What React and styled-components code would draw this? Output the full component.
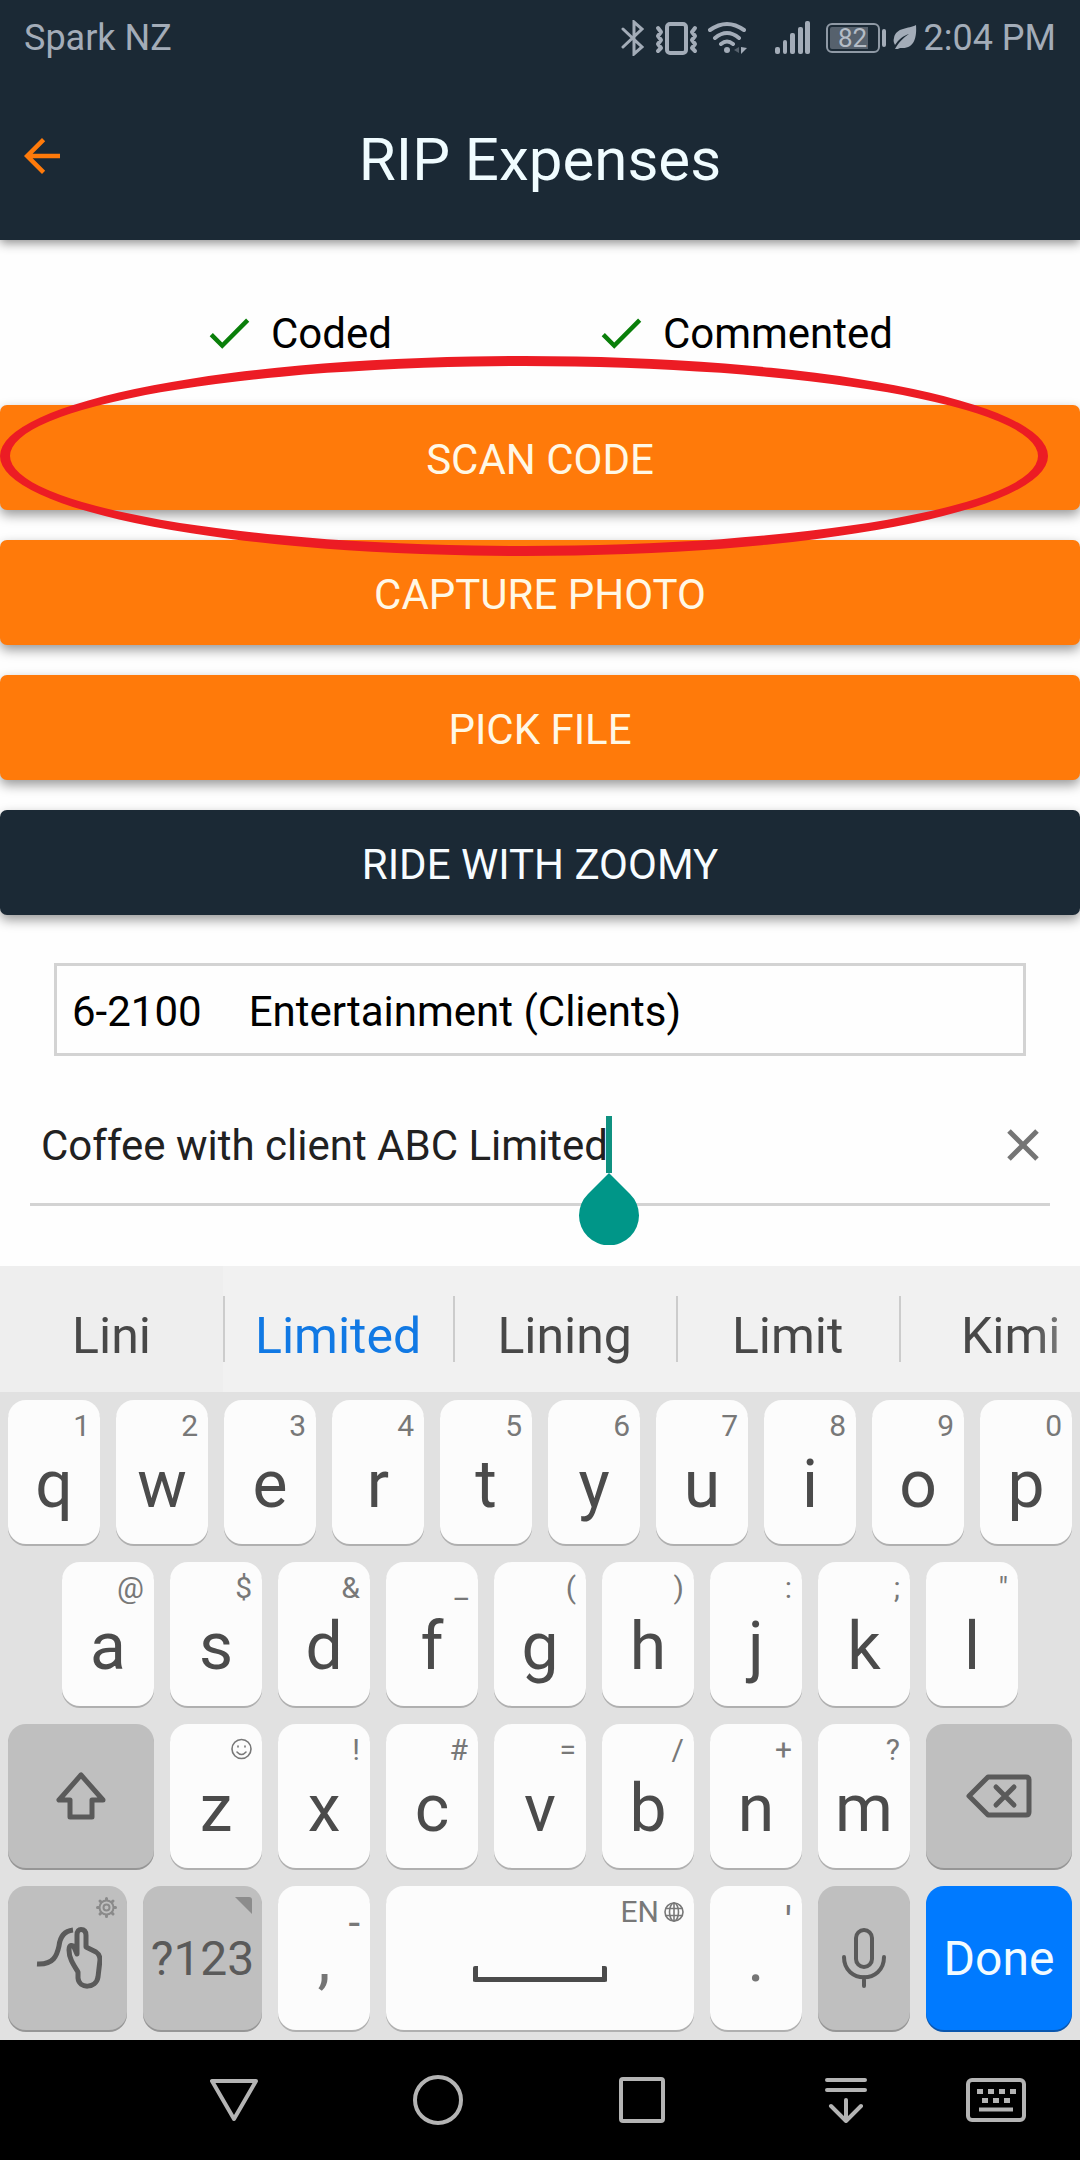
import { useState } from "react";
import styled, { createGlobalStyle } from "styled-components";

const GlobalStyle = createGlobalStyle`
  * {
    box-sizing: border-box;
  }
  body {
    margin: 0;
    background: #fefefe;
    font-family: Roboto, "Noto Sans", sans-serif;
  }
  button,
  input {
    margin: 0;
    padding: 0;
    border: 0;
    background: none;
    font-family: inherit;
    font-weight: 400;
  }
  svg {
    display: block;
    flex-shrink: 0;
  }
`;

const Page = styled.div`
  display: flex;
  flex-direction: column;
  min-height: 100vh;
  overflow: hidden;
`;

/* header */

const Header = styled.header`
  background: #1b2935;
  box-shadow: 0 3px 10px rgba(0, 0, 0, 0.45);
`;

const StatusBar = styled.div`
  display: flex;
  align-items: center;
  justify-content: space-between;
  height: 76px;
  padding: 0 24px;
  font-size: 36px;
  color: #a3acb8;
`;

const StatusIcons = styled.div`
  display: flex;
  align-items: center;
  gap: 6px;
`;

const Battery = styled.div`
  display: flex;
  align-items: center;
  gap: 2px;
  margin-left: 8px;
  &:after {
    content: "";
    width: 4px;
    height: 18px;
    border-radius: 2px;
    background: #a3acb8;
  }
`;

const BatteryLevel = styled.span`
  width: 54px;
  height: 30px;
  padding: 2px;
  border: 2px solid #8f99a5;
  border-radius: 6px;
  background: linear-gradient(90deg, #56616d 82%, transparent 82%) content-box;
  font-size: 26px;
  line-height: 22px;
  text-align: center;
  color: #b4bcc6;
`;

const TitleBar = styled.div`
  display: grid;
  grid-template-columns: 36px 1fr 36px;
  align-items: center;
  height: 164px;
  padding: 0 24px 4px;
  h1 {
    margin: 0;
    padding-top: 6px;
    font-size: 60px;
    font-weight: 400;
    text-align: center;
    color: #f0fcff;
  }
`;

const IconButton = styled.button`
  display: flex;
  color: ${(props) => props.$color};
`;

/* form */

const Main = styled.main`
  flex: 1;
  padding: 66px 0 60px;
`;

const Checks = styled.div`
  display: flex;
  justify-content: space-between;
  padding: 0 187px 0 202px;
  margin-bottom: 45px;
`;

const Check = styled.div`
  display: flex;
  align-items: center;
  gap: 15px;
  height: 54px;
  font-size: 42px;
  color: #000000;
  svg {
    color: #0a7f0a;
  }
`;

const Actions = styled.div`
  position: relative;
  display: flex;
  flex-direction: column;
  gap: 30px;
`;

const ActionButton = styled.button`
  height: 105px;
  padding-top: 4px;
  border-radius: 7px;
  background: ${(props) => (props.$dark ? "#1b2935" : "#ff7a0a")};
  box-shadow: 0 5px 12px rgba(0, 0, 0, 0.4);
  font-size: 42px;
  text-transform: uppercase;
  color: ${(props) => (props.$dark ? "#f7fcff" : "#fff8e6")};
`;

/* red ring drawn over the first button */
const Highlight = styled.div`
  position: absolute;
  top: -49px;
  left: 0;
  width: 97%;
  height: 200px;
  border: 10px solid #ec1c24;
  border-radius: 50%;
  pointer-events: none;
`;

const AccountPicker = styled.button`
  display: flex;
  align-items: center;
  gap: 47px;
  width: calc(100% - 108px);
  height: 93px;
  margin: 48px 54px 30px;
  padding: 4px 15px 0;
  border: 3px solid #d3d3d3;
  font-size: 42px;
  color: #000000;
`;

const Comment = styled.div`
  display: flex;
  align-items: center;
  height: 120px;
  margin: 0 30px;
  padding: 0 11px;
  border-bottom: 3px solid #d3d3d3;
  input {
    field-sizing: content;
    height: 57px;
    padding-top: 2px;
    font-size: 42px;
    color: #212121;
    caret-color: transparent;
    outline: none;
  }
  button {
    margin-left: auto;
  }
`;

const Caret = styled.span`
  position: relative;
  width: 6px;
  height: 57px;
  margin-left: -2px;
  background: #0f9180;
  svg {
    position: absolute;
    top: 100%;
    left: -27px;
  }
`;

/* keyboard */

const Suggestions = styled.div`
  display: flex;
  height: 126px;
  overflow: hidden;
  background: #f1f1f1;
`;

const Suggestion = styled.button`
  flex: none;
  min-width: 223px;
  padding: 14px 32px 0;
  background: ${(props) => (props.$pressed ? "#eeeeee" : "none")};
  font-size: 50px;
  color: ${(props) => (props.$main ? "#1179e4" : "#484848")};
  & + & {
    background-image: linear-gradient(#cccccc, #cccccc);
    background-repeat: no-repeat;
    background-size: 2px 66px;
    background-position: left center;
  }
  &:last-child {
    color: transparent;
    background-image: linear-gradient(#cccccc, #cccccc),
      linear-gradient(90deg, #484848 130px, #8a8a8a 170px);
    background-size: 2px 66px, 100% 100%;
    background-clip: border-box, text;
  }
`;

const Keyboard = styled.div`
  display: grid;
  grid-template-columns: repeat(40, 1fr);
  row-gap: 18px;
  padding: 8px 0 10px;
  background: #e1e1e1;
`;

const keyColors = {
  light: { bg: "#fcfcfc", text: "#4b4b4b", edge: "#b0b0b0" },
  gray: { bg: "#bfbfbf", text: "#5a5a5a", edge: "#969696" },
  blue: { bg: "#007aff", text: "#f2fbff", edge: "#0a56ae" },
};

const KeyCap = styled.button`
  position: relative;
  display: flex;
  align-items: center;
  justify-content: center;
  grid-column: ${(props) => (props.$start ? `${props.$start} / ` : "")}span
    ${(props) => props.$span};
  height: 144px;
  margin: 0 8px;
  padding-top: ${(props) => (props.$letter ? "24px" : "0")};
  border-radius: 18px;
  background: ${(props) => keyColors[props.$tone].bg};
  box-shadow: 0 2px 0 ${(props) => keyColors[props.$tone].edge};
  font-size: ${(props) => (props.$small ? "48px" : "66px")};
  color: ${(props) =>
    props.$muted ? "#757575" : keyColors[props.$tone].text};
`;

const Hint = styled.span`
  position: absolute;
  top: ${(props) => (props.$big ? "12px" : "8px")};
  right: 10px;
  display: flex;
  align-items: center;
  gap: 5px;
  font-size: ${(props) => (props.$big ? "42px" : "30px")};
  line-height: ${(props) => (props.$big ? "49px" : "35px")};
  color: #787878;
  svg:only-child {
    margin-top: 3px;
  }
  svg + svg,
  span + svg {
    margin-top: 0;
  }
`;

const SpaceMark = styled.span`
  width: 134px;
  height: 16px;
  margin-top: 32px;
  border: 5px solid #4b4b4b;
  border-top: 0;
  border-radius: 2px;
`;

const NavBar = styled.nav`
  display: grid;
  grid-template-columns: 132px repeat(4, 1fr) 96px 36px;
  height: 120px;
  background: #000000;
  button {
    display: flex;
    align-items: center;
    justify-content: center;
    color: #b4b4b4;
  }
  button:first-child {
    grid-column: 2;
  }
`;

const Icon = ({ w, h, stroke = 0, children }) => (
  <svg
    width={w}
    height={h}
    viewBox={`0 0 ${w} ${h}`}
    fill={stroke ? "none" : "currentColor"}
    stroke={stroke ? "currentColor" : "none"}
    strokeWidth={stroke}
    strokeLinecap="round"
    strokeLinejoin="round"
    aria-hidden="true"
  >
    {children}
  </svg>
);

const BluetoothIcon = () => (
  <Icon w={28} h={36} stroke={3}>
    <path d="M3 9l19 18-8 7V2l8 7L3 27" strokeLinejoin="miter" />
  </Icon>
);

const VibrateIcon = () => (
  <Icon w={46} h={36} stroke={4}>
    <rect x="13" y="4" width="19" height="29" rx="3" />
    <path
      strokeWidth="4"
      d="M4 8l3 4-3 4 3 4-3 4 3 4-3 3M41 8l-3 4 3 4-3 4 3 4-3 4 3 3"
    />
  </Icon>
);

const WifiIcon = () => (
  <Icon w={60} h={36} stroke={4}>
    <path d="M4 10Q21-2 38 10M9 18Q21 8 33 18M15 24q6-5 12 0" />
    <circle cx="21" cy="30" r="3" fill="currentColor" stroke="none" />
    <path d="M33 27v6l-5-3z" fill="#56616d" stroke="none" />
    <path d="M35 27v7l6-6z" fill="currentColor" stroke="none" />
  </Icon>
);

const SignalIcon = () => (
  <Icon w={40} h={36}>
    <rect x="3" y="27" width="5" height="7" rx="2" />
    <rect x="11" y="20" width="4" height="14" rx="2" />
    <rect x="18" y="13" width="5" height="21" rx="2" />
    <rect x="26" y="7" width="5" height="27" rx="2" />
    <rect x="33" y="1" width="5" height="33" rx="2" />
  </Icon>
);

const LeafIcon = () => (
  <Icon w={26} h={28}>
    <path d="M24 1C17 5 4 3 2 14c-1 3 0 5 1 7 4-6 8-9 14-11C11 14 7 18 3 25h3c1-1 2-1 3-1 13 1 16-10 15-23z" />
  </Icon>
);

const BackIcon = () => (
  <svg width="36" height="36" viewBox="4 4 16 16" fill="currentColor">
    <path d="M20 11H7.83l5.59-5.59L12 4l-8 8 8 8 1.41-1.41L7.83 13H20v-2z" />
  </svg>
);

const CheckIcon = () => (
  <svg width="54" height="54" viewBox="0 0 24 24" fill="currentColor">
    <path d="M9 16.17L4.83 12l-1.42 1.41L9 19 21 7l-1.41-1.41z" />
  </svg>
);

const CloseIcon = () => (
  <Icon w={32} h={32} stroke={5}>
    <path d="M2 2l28 28M30 2L2 30" strokeLinecap="butt" />
  </Icon>
);

const DropIcon = () => (
  <svg width="60" height="72" viewBox="0 0 60 72" fill="#009688">
    <path d="M30 0L51 21A30 30 0 1 1 9 21z" />
  </svg>
);

const SmileIcon = () => (
  <Icon w={21} h={27} stroke={1.6}>
    <circle cx="10.5" cy="14" r="9.5" />
    <path d="M6 17q4.500 5 9 0M7 11v1M14 11v1" />
  </Icon>
);

const GearIcon = () => (
  <Icon w={21} h={21} stroke={2}>
    <g stroke="#8a8a8a">
      <circle cx="10.500" cy="10.500" r="7" />
      <circle cx="10.500" cy="10.500" r="3" />
      <path
        strokeWidth="3"
        d="M10.500 1.500v1M10.500 18.500v1M1.500 10.500h1M18.500 10.500h1M4 4l1 1M16 16l1 1M4 17l1-1M16 5l1-1"
      />
    </g>
  </Icon>
);

const CornerIcon = () => (
  <svg width="17" height="17" viewBox="0 0 17 17" fill="#8c8c8c">
    <path d="M0 0h14q3 0 3 3v14z" />
  </svg>
);

const GlobeIcon = () => (
  <Icon w={20} h={20} stroke={1.6}>
    <circle cx="10" cy="10" r="9" />
    <ellipse cx="10" cy="10" rx="4.500" ry="9" />
    <path d="M10 1v18M2 6.500h16M2 13.500h16" />
  </Icon>
);

const ShiftIcon = () => (
  <Icon w={50} h={48} stroke={5}>
    <path d="M25 3L3 28h11v17h22V28h11z" />
  </Icon>
);

const BackspaceIcon = () => (
  <Icon w={66} h={44} stroke={5}>
    <path d="M22 3h38q3 0 3 3v32q0 3-3 3H22L3 22z" />
    <path d="M30 13l18 18M48 13L30 31" />
  </Icon>
);

const SwipeIcon = () => (
  <Icon w={68} h={62} stroke={5}>
    <path d="M3 37c17 1 20-9 22-18 1-9 5-15 14-16" strokeLinecap="butt" />
    <path d="M47 2.500c3 0 5 2 5 6V20l10 5c3 2 4 4 4 8l-2 17c-2 12-19 12-20 1v-6c-5-8-9-14-9-22 0-6 4-5 5-3l3 7V8c0-4 2-5.500 4-5.500z" />
  </Icon>
);

const MicIcon = () => (
  <Icon w={44} h={60} stroke={4}>
    <rect x="14" y="2" width="16" height="37" rx="8" />
    <path d="M2 29c0 27 40 27 40 0M22 49v9" />
  </Icon>
);

const rows = [
  ["q1", "w2", "e3", "r4", "t5", "y6", "u7", "i8", "o9", "p0"],
  ["a@", "s$", "d&", "f_", "g(", "h)", "j:", "k;", 'l"'],
  ["z", "x!", "c#", "v=", "b/", "n+", "m?"],
];

const Key = ({ tone = "light", span = 4, hint, bigHint, children, ...rest }) => (
  <KeyCap type="button" $tone={tone} $span={span} {...rest}>
    {hint && <Hint $big={bigHint}>{hint}</Hint>}
    {children}
  </KeyCap>
);

const LetterRow = ({ keys, start }) =>
  keys.map((key, i) => (
    <Key
      key={key}
      $letter
      $start={i === 0 ? start : undefined}
      hint={key[1] || <SmileIcon />}
    >
      {key[0]}
    </Key>
  ));

const App = () => {
  const [comment, setComment] = useState("Coffee with client ABC Limited");

  return (
    <Page>
      <GlobalStyle />
      <Header>
        <StatusBar>
          <span>Spark NZ</span>
          <StatusIcons>
            <BluetoothIcon />
            <VibrateIcon />
            <WifiIcon />
            <SignalIcon />
            <Battery>
              <BatteryLevel>82</BatteryLevel>
            </Battery>
            <LeafIcon />
            <span>2:04 PM</span>
          </StatusIcons>
        </StatusBar>
        <TitleBar>
          <IconButton type="button" aria-label="Back" $color="#ff7a0a">
            <BackIcon />
          </IconButton>
          <h1>RIP Expenses</h1>
        </TitleBar>
      </Header>

      <Main>
        <Checks>
          <Check>
            <CheckIcon />
            <span>Coded</span>
          </Check>
          <Check>
            <CheckIcon />
            <span>Commented</span>
          </Check>
        </Checks>
        <Actions>
          <ActionButton type="button">Scan code</ActionButton>
          <ActionButton type="button">Capture photo</ActionButton>
          <ActionButton type="button">Pick file</ActionButton>
          <ActionButton type="button" $dark>
            Ride with Zoomy
          </ActionButton>
          <Highlight />
        </Actions>
        <AccountPicker type="button">
          <span>6-2100</span>
          <span>Entertainment (Clients)</span>
        </AccountPicker>
        <Comment>
          <input
            type="text"
            aria-label="Comment"
            value={comment}
            onChange={(e) => setComment(e.target.value)}
          />
          <Caret>
            <DropIcon />
          </Caret>
          <IconButton
            type="button"
            aria-label="Clear"
            $color="#757575"
            onClick={() => setComment("")}
          >
            <CloseIcon />
          </IconButton>
        </Comment>
      </Main>

      <Suggestions>
        <Suggestion type="button" $pressed>
          Lini
        </Suggestion>
        <Suggestion type="button" $main>
          Limited
        </Suggestion>
        <Suggestion type="button">Lining</Suggestion>
        <Suggestion type="button">Limit</Suggestion>
        <Suggestion type="button">Kimi</Suggestion>
      </Suggestions>

      <Keyboard>
        <LetterRow keys={rows[0]} />
        <LetterRow keys={rows[1]} start={3} />
        <Key tone="gray" span={6} $start={1} aria-label="Shift">
          <ShiftIcon />
        </Key>
        <LetterRow keys={rows[2]} />
        <Key tone="gray" span={6} aria-label="Backspace">
          <BackspaceIcon />
        </Key>
        <Key tone="gray" span={5} hint={<GearIcon />} aria-label="Swipe typing">
          <SwipeIcon />
        </Key>
        <Key tone="gray" span={5} hint={<CornerIcon />} $small>
          ?123
        </Key>
        <Key hint="-" bigHint $muted>
          ,
        </Key>
        <Key
          span={12}
          aria-label="Space"
          hint={
            <>
              <span>EN</span>
              <GlobeIcon />
            </>
          }
        >
          <SpaceMark />
        </Key>
        <Key hint="'" bigHint $muted>
          .
        </Key>
        <Key tone="gray" aria-label="Voice input">
          <MicIcon />
        </Key>
        <Key tone="blue" span={6} $small>
          Done
        </Key>
      </Keyboard>

      <NavBar>
        <button type="button" aria-label="Back">
          <Icon w={50} h={50} stroke={4}>
            <path d="M3 6h44L25 44z" />
          </Icon>
        </button>
        <button type="button" aria-label="Home">
          <Icon w={50} h={50} stroke={4}>
            <circle cx="25" cy="25" r="23" />
          </Icon>
        </button>
        <button type="button" aria-label="Recent apps">
          <Icon w={50} h={50} stroke={4}>
            <rect x="4" y="4" width="42" height="42" rx="2" />
          </Icon>
        </button>
        <button type="button" aria-label="Notifications">
          <Icon w={42} h={46} stroke={4}>
            <path d="M2 3h38M2 13h38M21 23v20M6 29l15 15 15-15" />
          </Icon>
        </button>
        <button type="button" aria-label="Switch keyboard">
          <Icon w={60} h={44} stroke={4}>
            <rect x="2" y="2" width="56" height="40" rx="4" />
            <path
              strokeLinecap="butt"
              strokeWidth="5"
              strokeDasharray="6 5"
              d="M11 13.500h39"
            />
            <path
              strokeLinecap="butt"
              strokeWidth="5"
              strokeDasharray="6 5"
              d="M16 22.500h28"
            />
            <path strokeLinecap="butt" d="M13 31.500h34" />
          </Icon>
        </button>
      </NavBar>
    </Page>
  );
};

export default App;
